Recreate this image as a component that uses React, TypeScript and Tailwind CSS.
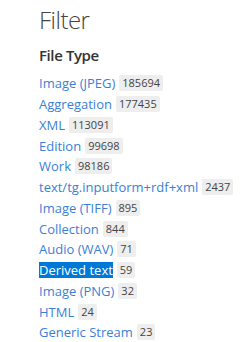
const fileTypes: { label: string; count: number; selected?: boolean }[] = [
  { label: "Image (JPEG)", count: 185694 },
  { label: "Aggregation", count: 177435 },
  { label: "XML", count: 113091 },
  { label: "Edition", count: 99698 },
  { label: "Work", count: 98186 },
  { label: "text/tg.inputform+rdf+xml", count: 2437 },
  { label: "Image (TIFF)", count: 895 },
  { label: "Collection", count: 844 },
  { label: "Audio (WAV)", count: 71 },
  { label: "Derived text", count: 59, selected: true },
  { label: "Image (PNG)", count: 32 },
  { label: "HTML", count: 24 },
  { label: "Generic Stream", count: 23 },
];

export default function App() {
  return (
    <div className="w-[246px] h-[342px] bg-white pl-[39px] overflow-hidden" style={{ fontFamily: '"Open Sans", sans-serif' }}>
      <h2 className="pt-[4px] text-[24px] leading-[32px] font-light text-[#444] tracking-[-0.5px]">Filter</h2>
      <h3 className="mt-[9px] text-[15px] leading-[20px] font-semibold text-[#333] tracking-[-0.4px]">File Type</h3>
      <ul className="mt-[8px]">
        {fileTypes.map((f) => (
          <li key={f.label} className="flex items-center h-[20.75px]">
            <span
              className={`text-[13px] leading-[16px] ${
                f.selected ? "bg-[#0078d7] text-white" : "text-[#3a7fd5]"
              }`}
            >
              {f.label}
            </span>
            <span className="ml-[4px] h-[16px] px-[3px] bg-[#eeeeee] text-[#444] text-[11px] leading-[16px] rounded-[2px]">
              {f.count}
            </span>
          </li>
        ))}
      </ul>
    </div>
  );
}
